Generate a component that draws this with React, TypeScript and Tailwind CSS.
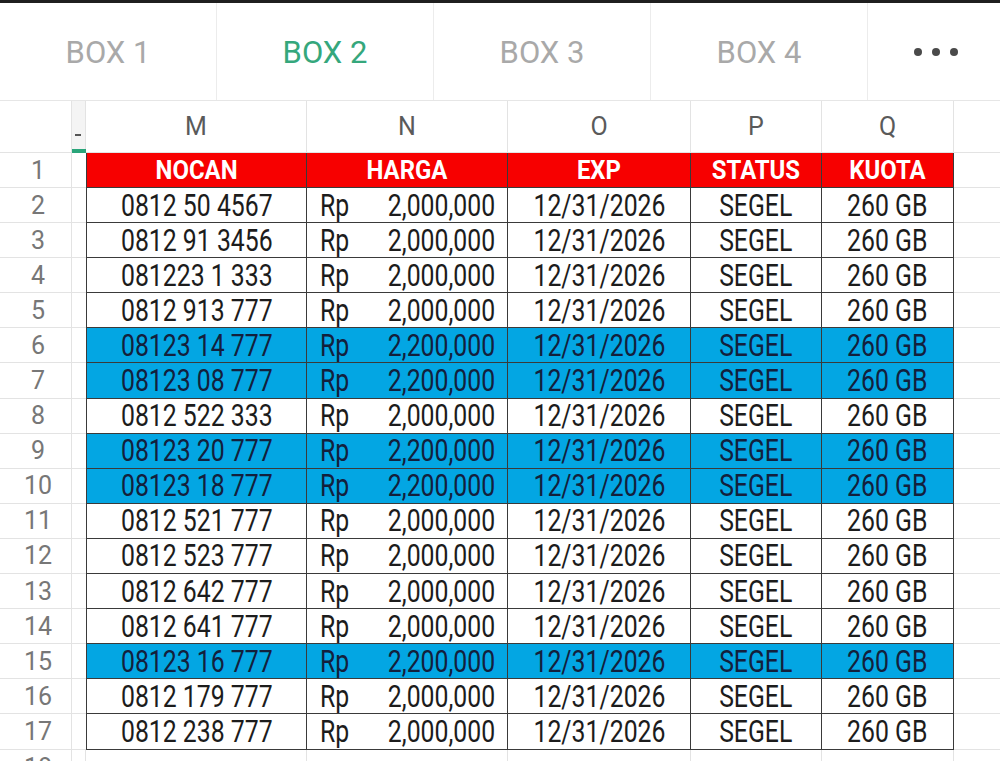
import * as React from "react";

type Row = { no: string; price: string; blue?: boolean };

const ROWS: Row[] = [
  { no: "0812 50 4567", price: "2,000,000" },
  { no: "0812 91 3456", price: "2,000,000" },
  { no: "081223 1 333", price: "2,000,000" },
  { no: "0812 913 777", price: "2,000,000" },
  { no: "08123 14 777", price: "2,200,000", blue: true },
  { no: "08123 08 777", price: "2,200,000", blue: true },
  { no: "0812 522 333", price: "2,000,000" },
  { no: "08123 20 777", price: "2,200,000", blue: true },
  { no: "08123 18 777", price: "2,200,000", blue: true },
  { no: "0812 521 777", price: "2,000,000" },
  { no: "0812 523 777", price: "2,000,000" },
  { no: "0812 642 777", price: "2,000,000" },
  { no: "0812 641 777", price: "2,000,000" },
  { no: "08123 16 777", price: "2,200,000", blue: true },
  { no: "0812 179 777", price: "2,000,000" },
  { no: "0812 238 777", price: "2,000,000" },
];

const TABS = ["BOX 1", "BOX 2", "BOX 3", "BOX 4"];
const HEADS = ["NOCAN", "HARGA", "EXP", "STATUS", "KUOTA"];

// the sheet renders its text narrow; Roboto squeezed sideways gets close
function Squeeze({ children, origin = "origin-center" }: { children: React.ReactNode; origin?: string }) {
  return <span className={"inline-block scale-x-[0.8] whitespace-nowrap " + origin}>{children}</span>;
}

const dataTd = "border-r border-b border-[#3a3a3a] p-0 text-[31px] leading-none";
const lightTd = "border-b border-[#e3e3e3] p-0";
const rowNum = "border-r border-b border-[#e3e3e3] p-0 pl-[5px] text-center text-[25px] leading-none text-[#777]";

export default function App() {
  return (
    <div className="h-[761px] w-[1000px] overflow-hidden bg-white font-['Roboto',sans-serif]">
      <div className="h-[3px] bg-[#1f1f1f]" />

      {/* sheet tabs */}
      <div className="flex h-[98px] border-b border-[#e6e6e6]">
        {TABS.map((t, i) => (
          <div
            key={t}
            className={
              "flex w-[217px] items-center justify-center border-r border-[#ececec] pt-[3px] text-[31px] " +
              (i === 1 ? "text-[#35a77c]" : "text-[#a9a9a9]")
            }
          >
            {t}
          </div>
        ))}
        <div className="flex flex-1 items-center justify-center gap-[10px] pl-[4px]">
          <span className="size-[8px] rounded-full bg-[#4a4a4a]" />
          <span className="size-[8px] rounded-full bg-[#4a4a4a]" />
          <span className="size-[8px] rounded-full bg-[#4a4a4a]" />
        </div>
      </div>

      <table className="w-[1000px] table-fixed border-separate border-spacing-0">
        <colgroup>
          <col className="w-[72px]" />
          <col className="w-[14px]" />
          <col className="w-[221px]" />
          <col className="w-[201px]" />
          <col className="w-[183px]" />
          <col className="w-[131px]" />
          <col className="w-[132px]" />
          <col />
        </colgroup>
        <tbody>
          {/* column letters */}
          <tr className="h-[52px] text-[25px] text-[#5a5a5a]">
            <td className="border-r border-b border-[#e3e3e3] p-0" />
            <td className="relative border-r border-b border-[#e3e3e3] bg-[#f4f4f4] p-0">
              <span className="absolute left-[3px] top-[33px] h-[2px] w-[6px] bg-[#555]" />
              <span className="absolute bottom-[-1px] left-0 h-[4px] w-[14px] bg-[#2aa57a]" />
            </td>
            {["M", "N", "O", "P", "Q"].map((c) => (
              <td key={c} className="border-r border-b border-[#e3e3e3] p-0 text-center leading-none">
                {c}
              </td>
            ))}
            <td className={lightTd} />
          </tr>

          {/* header row */}
          <tr className="h-[35px]">
            <td className={rowNum}>1</td>
            <td className={lightTd} />
            {HEADS.map((h, i) => (
              <td
                key={h}
                className={
                  "border-r border-b border-[#3a3a3a] bg-[#f70000] p-0 text-center text-[26px] font-bold leading-none text-white" +
                  (i === 0 ? " border-l" : "")
                }
              >
                <span className="inline-block scale-x-[0.92]">{h}</span>
              </td>
            ))}
            <td className={lightTd} />
          </tr>

          {ROWS.map((r, i) => {
            const tone = r.blue ? " bg-[#03a6e3] text-[#13203c]" : " bg-white text-[#1c1c1c]";
            return (
              <tr key={i} className={i % 2 === 0 ? "h-[35px]" : "h-[35.2px]"}>
                <td className={rowNum}>{i + 2}</td>
                <td className={lightTd} />
                <td className={dataTd + tone + " border-l text-center"}>
                  <Squeeze>{r.no}</Squeeze>
                </td>
                <td className={dataTd + tone}>
                  <div className="flex items-center justify-between pl-[13px] pr-[12px]">
                    <Squeeze origin="origin-left">Rp</Squeeze>
                    <Squeeze origin="origin-right">{r.price}</Squeeze>
                  </div>
                </td>
                <td className={dataTd + tone + " text-center"}>
                  <Squeeze>12/31/2026</Squeeze>
                </td>
                <td className={dataTd + tone + " text-center"}>
                  <Squeeze>SEGEL</Squeeze>
                </td>
                <td className={dataTd + tone + " text-center"}>
                  <Squeeze>260 GB</Squeeze>
                </td>
                <td className={lightTd} />
              </tr>
            );
          })}

          {/* partly visible row 18 */}
          <tr className="h-[35px]">
            <td className="border-r border-[#e3e3e3] p-0 pl-[5px] text-center text-[25px] leading-none text-[#777]">18</td>
            <td className="border-r border-[#e3e3e3] p-0" />
            <td className="border-r border-[#e3e3e3] p-0" />
            <td className="border-r border-[#e3e3e3] p-0" />
            <td className="border-r border-[#e3e3e3] p-0" />
            <td className="border-r border-[#e3e3e3] p-0" />
            <td className="border-r border-[#e3e3e3] p-0" />
            <td className="p-0" />
          </tr>
        </tbody>
      </table>
    </div>
  );
}
